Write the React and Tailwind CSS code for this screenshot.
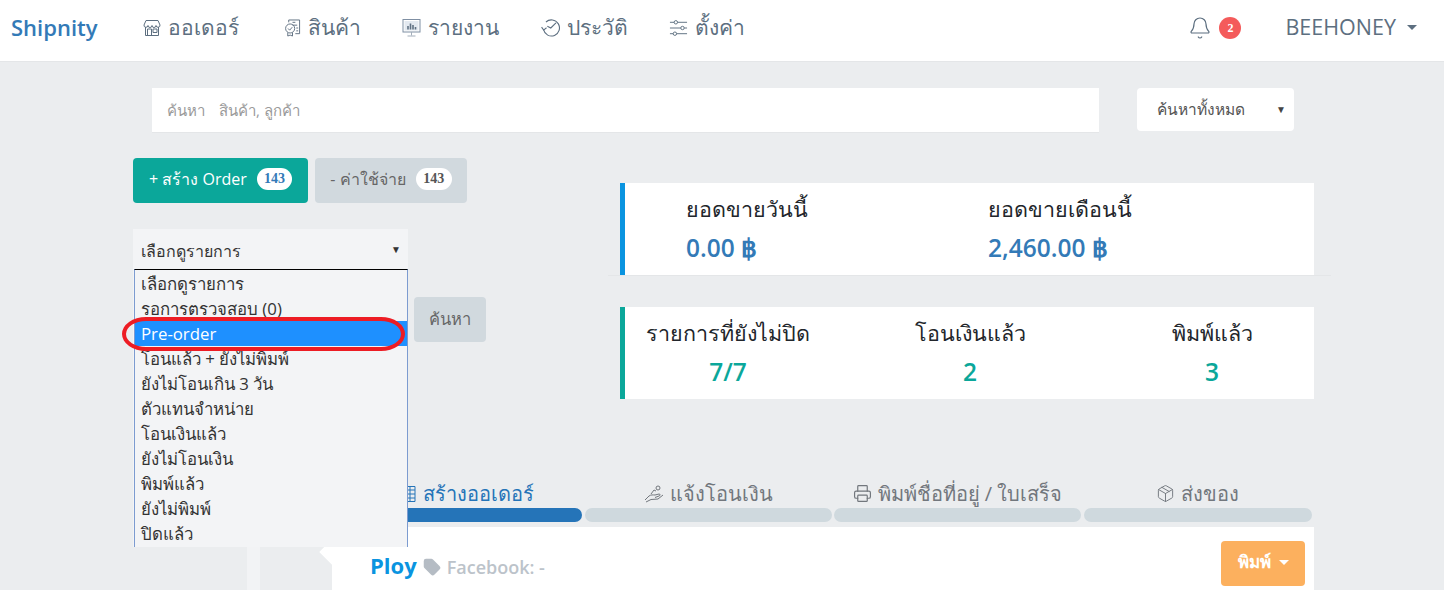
import { Bell, Tag, Printer, Package } from "lucide-react";

const sans = "font-['Open_Sans','Noto_Sans','Liberation_Sans',sans-serif]";

const selectOptions = [
  "เลือกดูรายการ",
  "รอการตรวจสอบ (0)",
  "Pre-order",
  "โอนแล้ว + ยังไม่พิมพ์",
  "ยังไม่โอนเกิน 3 วัน",
  "ตัวแทนจำหน่าย",
  "โอนเงินแล้ว",
  "ยังไม่โอนเงิน",
  "พิมพ์แล้ว",
  "ยังไม่พิมพ์",
  "ปิดแล้ว",
];

function ShopIcon() {
  return (
    <svg width="18" height="18" viewBox="0 0 18 18" fill="none" stroke="currentColor" strokeWidth="1">
      <path d="M3 1.500h12l2 4.500a2 2 0 0 1-4 .5 2 2 0 0 1-4 0 2 2 0 0 1-4 0 2 2 0 0 1-4-.5z" />
      <path d="M2.500 8v8.500h13V8M4.500 10h4v6.500h-4zM10 10h4v3.500h-4z" />
    </svg>
  );
}

function ListIcon() {
  return (
    <svg width="17" height="20" viewBox="0 0 18 20" fill="none" stroke="currentColor" strokeWidth="1">
      <path d="M5 4V1.500h11.500v14.500H12M9 4h3M9 7h5M13 10h2M13 13h2" />
      <circle cx="6.500" cy="10.500" r="4.800" />
      <path d="M4.300 10.500l1.700 1.800 2.800-3.200M4 15v3.500l2.500-1 2.500 1V15" />
    </svg>
  );
}

function ReportIcon() {
  return (
    <svg width="19" height="20" viewBox="0 0 18 20" fill="none">
      <rect x="0.500" y="1.500" width="17" height="12.500" stroke="#7f8fa3" />
      <rect x="2" y="3" width="14" height="9.500" fill="#e3e9f0" />
      <path d="M5.500 11.500V8M8 11.500V5.500M10.500 11.500V7M13 11.500V9" stroke="#5f7183" strokeWidth="1.600" />
      <path d="M9 14v3.500M5 18h8" stroke="#a3aebb" />
    </svg>
  );
}

function HistoryIcon() {
  return (
    <svg width="19" height="18" viewBox="0 1.500 16.500 15" fill="none" stroke="currentColor" strokeWidth="0.950">
      <path d="M2.200 10.500A7 7 0 1 0 4.300 3.800" />
      <path d="M.5 8.200l1.800 2.600 2.500-2M13 4.500l-4.500 4.500-3-1.500" />
    </svg>
  );
}

function SlidersIcon() {
  return (
    <svg width="19" height="18" viewBox="0 0 20 18" fill="none" stroke="currentColor" strokeWidth="1">
      <path d="M1 3h4.500M9 3h10M1 9h11.500M16 9h3M1 15h3.500M8 15h11" />
      <circle cx="7.200" cy="3" r="1.800" />
      <circle cx="14.200" cy="9" r="1.800" />
      <circle cx="6.200" cy="15" r="1.800" />
    </svg>
  );
}

function NavItem({ icon, label }) {
  return (
    <a className="flex items-center gap-[7px] text-[#5d6f80] text-[21px]">
      {icon}
      <span>{label}</span>
    </a>
  );
}

function Caret({ className }) {
  return <span className={"inline-block w-0 h-0 border-x-[5px] border-x-transparent border-t-[5px] " + className} />;
}

function Stat({ title, value, color }) {
  return (
    <div>
      <div className="text-[21.500px] leading-[30px] font-medium text-[#22262b]">{title}</div>
      <div className={"text-[24.500px] leading-[34px] mt-[7px] font-semibold " + color}>{value}</div>
    </div>
  );
}

function Step({ icon, label, active, width = "w-[247px]" }) {
  return (
    <div className={"flex flex-col " + width}>
      <div className={"h-[25px] pb-[4px] flex items-center justify-center gap-[6px] text-[20px] " + (active ? "text-[#2574b8]" : "text-[#72777d]")}>
        {icon}
        <span>{label}</span>
      </div>
      <div className={"h-[14px] rounded-full " + (active ? "bg-[#2574b8]" : "bg-[#cfd9de]")} />
    </div>
  );
}

function ReceiptIcon() {
  return (
    <svg width="18" height="18" viewBox="0 0 18 18" fill="none" stroke="currentColor" strokeWidth="1">
      <path d="M2 1.500h14v15H2zM2 5h14M6 1.500v15M11 1.500v15M2 9h14M2 13h14" />
    </svg>
  );
}

function HandIcon() {
  return (
    <svg width="20" height="18" viewBox="0 0 20 18" fill="none" stroke="currentColor" strokeWidth="1">
      <circle cx="14" cy="3" r="2" />
      <path d="M1 15l4-4c2-1.500 4-1 6-1l4-1c1.500 0 1.500 1.500 0 2l-4 1.500M2 17l5-2.500 7-.5 5-4" />
      <path d="M7 9l3-4 2 1" />
    </svg>
  );
}

export default function App() {
  return (
    <div className={"h-[590px] overflow-hidden bg-[#ebedef] relative " + sans}>
      <nav className="h-[62px] bg-white border-b border-[#e4e6e8] flex items-center pl-[11px] pr-[27px] pb-[6px]">
        <span className="text-[22px] font-semibold text-[#337ab7] w-[132px]">Shipnity</span>
        <div className="grid grid-cols-[141px_118px_139px_128px_auto] items-center">
          <NavItem icon={<ShopIcon />} label="ออเดอร์" />
          <NavItem icon={<ListIcon />} label="สินค้า" />
          <NavItem icon={<ReportIcon />} label="รายงาน" />
          <NavItem icon={<HistoryIcon />} label="ประวัติ" />
          <NavItem icon={<SlidersIcon />} label="ตั้งค่า" />
        </div>
        <div className="ml-auto flex items-center">
          <Bell className="w-[24px] h-[24px] text-[#5d6f80]" strokeWidth={1.200} />
          <span className="ml-[7px] w-[22px] h-[22px] rounded-full bg-[#f45b5b] text-white text-[12px] font-bold flex items-center justify-center font-['Liberation_Serif',serif]">2</span>
          <span className="ml-[44px] text-[21.500px] text-[#5d6f80]">BEEHONEY</span>
          <Caret className="ml-[11px] border-t-[#5d6f80]" />
        </div>
      </nav>

      <div className="mt-[26px] pl-[152px] flex items-start">
        <div className="w-[947px] h-[45px] bg-white border-b border-[#e4e6e8] pl-[15px] flex items-center gap-[14px] text-[15px] text-[#9a9a9a]">
          <span>ค้นหา</span>
          <span>สินค้า, ลูกค้า</span>
        </div>
        <div className="ml-[38px] w-[157px] h-[43px] bg-white rounded-[4px] flex items-center justify-between pl-[20px] pr-[8px] text-[15.500px] text-[#555]">
          <span>ค้นหาทั้งหมด</span>
          <span className="text-[10px] text-[#444]">▼</span>
        </div>
      </div>

      <div className="mt-[25px] pl-[133px] flex items-start">
        <div className="w-[487px] shrink-0">
          <div className="flex gap-[7px]">
            <button className="h-[45px] w-[175px] pb-[4px] rounded-[4px] bg-[#0ba79a] text-white text-[16px] flex items-center justify-center gap-[10px]">
              + สร้าง Order
              <span className="w-[35px] h-[22px] rounded-full bg-white text-[#337ab7] text-[14px] font-bold flex items-center justify-center font-['Liberation_Serif',serif]">143</span>
            </button>
            <button className="h-[45px] w-[152px] pb-[4px] rounded-[4px] bg-[#d1d9de] text-[#666] text-[16px] flex items-center justify-center gap-[10px]">
              - ค่าใช้จ่าย
              <span className="w-[36px] h-[22px] rounded-full bg-white text-[#555] text-[14px] font-bold flex items-center justify-center font-['Liberation_Serif',serif]">143</span>
            </button>
          </div>
        </div>

        <div className="w-[694px] mt-[25px]">
          <div className="relative h-[92px] bg-white border-l-[5px] border-[#0a94e0] flex pl-[61px] pt-[11px]">
            <div className="w-[302px]">
              <Stat title="ยอดขายวันนี้" value="0.00 ฿" color="text-[#337ab7]" />
            </div>
            <Stat title="ยอดขายเดือนนี้" value="2,460.00 ฿" color="text-[#337ab7]" />
            <div className="absolute left-[-17px] right-[-17px] bottom-[-1px] h-px bg-[#e4e6e8]" />
          </div>
          <div className="mt-[32px] h-[92px] bg-white border-l-[5px] border-[#0ba79a] pt-[11px]">
            <div className="grid grid-cols-3 w-[726px] -ml-[18px] text-center">
              <Stat title="รายการที่ยังไม่ปิด" value="7/7" color="text-[#0ba79a]" />
              <Stat title="โอนเงินแล้ว" value="2" color="text-[#0ba79a]" />
              <Stat title="พิมพ์แล้ว" value="3" color="text-[#0ba79a]" />
            </div>
          </div>
        </div>
      </div>

      <div className="mt-[84px] pl-[350px] flex gap-[2.500px]">
        <Step active icon={<ReceiptIcon />} label="สร้างออเดอร์" width="w-[232px]" />
        <Step icon={<HandIcon />} label="แจ้งโอนเงิน" />
        <Step icon={<Printer className="w-[19px] h-[19px]" strokeWidth={1.500} />} label="พิมพ์ชื่อที่อยู่ / ใบเสร็จ" />
        <Step icon={<Package className="w-[19px] h-[19px]" strokeWidth={1.200} />} label="ส่งของ" width="w-[228px]" />
      </div>

      <div className="mt-[5px] pl-[247px] flex h-[63px]">
        <div className="w-[13px] bg-[#f2f3f5]" />
        <div className="w-[72px]" />
        <div className="relative w-[982px] bg-white pl-[38px] pr-[9px] pt-[14px] flex justify-between items-start">
          <div className="absolute left-[-9px] top-[16px] w-[18px] h-[18px] bg-white rotate-45" />
          <div className="relative flex items-center mt-[8px]">
            <span className="text-[22px] font-bold text-[#0a94e0]">Ploy</span>
            <Tag className="ml-[6px] mt-[2px] w-[18px] h-[18px] text-[#b5bcc4] fill-[#b5bcc4]" />
            <span className="ml-[6px] mt-[4px] text-[18px] font-semibold text-[#bcc3ca]">Facebook: -</span>
          </div>
          <button className="w-[84px] h-[45px] pb-[3px] rounded-[4px] bg-[#fcb05e] text-white text-[17px] font-semibold flex items-center justify-center gap-[8px]">
            พิมพ์
            <Caret className="border-t-white" />
          </button>
        </div>
      </div>

      <div className="absolute left-[133px] top-[229px] w-[275px] bg-[#f3f4f6] text-[16.800px] text-[#333]">
        <div className="h-[40px] pt-[4px] flex items-center justify-between pl-[8px] pr-[7px] text-[16px]">
          <span>เลือกดูรายการ</span>
          <span className="text-[10px] -mt-[4px]">▼</span>
        </div>
        <ul className="ml-px w-[274px] h-[278px] pt-px border-x border-[#7c9bd0] border-t border-t-black overflow-hidden">
          {selectOptions.map((opt) => (
            <li key={opt} className={"h-[25px] leading-[25px] pl-[6px] " + (opt === "Pre-order" ? "bg-[#1e90ff] text-white" : "")}>
              {opt}
            </li>
          ))}
        </ul>
      </div>

      <button className="absolute left-[414px] top-[297px] w-[72px] h-[45px] rounded-[4px] bg-[#d1d9de] text-[#666] text-[16.500px]">ค้นหา</button>

      <div className="absolute left-[122px] top-[317px] w-[283px] h-[34px] rounded-[24px/17px] border-[4px] border-[#ed1c24]" />
    </div>
  );
}
